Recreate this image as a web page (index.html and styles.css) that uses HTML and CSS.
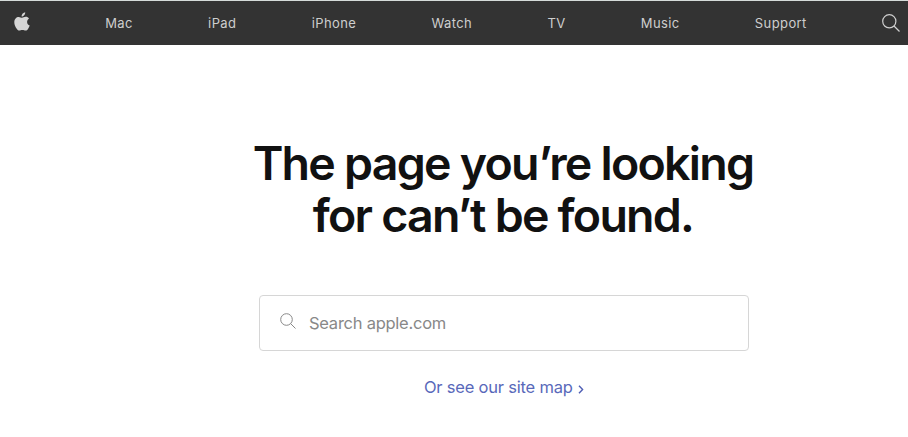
FILE: index.html
```html
<!DOCTYPE html>
<html lang="en">
<head>
    <meta charset="UTF-8">
    <meta name="viewport" content="width=device-width, initial-scale=1.0">
    <title>Page Not Found - Apple</title>
    <link rel="stylesheet" href="styles.css">
</head>
<body>
    <nav class="globalnav">
        <a href="#" class="nav-logo" aria-label="Apple">
            <svg width="16" height="19" viewBox="0 0 16 19">
                <path d="M11.2 0.2c.1 1.200-.4 2.300-1.100 3.100-.7.800-1.700 1.300-2.500 1.200-.1-1.100.4-2.200 1.100-3C9.400.8 10.400.3 11.200.2zM15 6.700c-1.200.7-1.900 1.800-1.900 3.200 0 1.700 1 3.100 2.600 3.700-.4 1.200-1 2.300-1.700 3.300-.7 1-1.400 1.600-2.400 1.600-1.200 0-1.700-.6-3.200-.6s-2.100.6-3.200.6c-1 0-1.800-.8-2.500-1.800C1.200 14.900.3 12.500.3 10.300c0-3.400 2.100-5.400 4.400-5.400 1.400 0 2.500.8 3.400.8.800 0 2-.9 3.700-.9 1.300 0 2.500.6 3.200 1.900z" fill="#d6d6d6"/>
            </svg>
        </a>
        <a href="#">Mac</a>
        <a href="#">iPad</a>
        <a href="#">iPhone</a>
        <a href="#">Watch</a>
        <a href="#">TV</a>
        <a href="#">Music</a>
        <a href="#">Support</a>
        <a href="#" class="nav-search" aria-label="Search">
            <svg width="18" height="18" viewBox="0 0 18 18" fill="none" stroke="#cfcfcf" stroke-width="1.2">
                <circle cx="7.300" cy="7.300" r="6.600"/>
                <path d="M12 12l5.500 5.500"/>
            </svg>
        </a>
    </nav>

    <main class="content">
        <h1>The page you’re looking<br>for can’t be found.</h1>

        <form class="search-form">
            <svg class="search-icon" width="16" height="16" viewBox="0 0 16 16" fill="none" stroke="#888" stroke-width="1">
                <circle cx="6.500" cy="6.500" r="5.800"/>
                <path d="M10.600 10.600l4.900 4.900"/>
            </svg>
            <input type="text" placeholder="Search apple.com" aria-label="Search apple.com">
        </form>

        <a href="#" class="sitemap-link">Or see our site map
            <svg width="6" height="9" viewBox="0 0 6 9" fill="none" stroke="#4f5fb5" stroke-width="1.400">
                <path d="M1 .7l3.600 3.800L1 8.300"/>
            </svg>
        </a>
    </main>
</body>
</html>
```
FILE: styles.css
```css
* {
    box-sizing: border-box;
}
body {
    font-family: Inter, "Liberation Sans", sans-serif;
    background-color: #fff;
    margin: 0;
}
.globalnav {
    display: flex;
    justify-content: space-between;
    align-items: center;
    height: 45px;
    padding: 0 8px 0 14px;
    background-color: #333;
    border-top: 1px solid #d5dbd9;
}
.globalnav a {
    color: #cecece;
    font-size: 13px;
    line-height: 20px;
    letter-spacing: 0.4px;
    text-decoration: none;
}
.globalnav svg {
    display: block;
}
.nav-logo {
    margin-bottom: 4px;
}
.content {
    display: flex;
    flex-direction: column;
    align-items: center;
    width: 500px;
    margin-left: 254px;
    padding-top: 92px;
}
h1 {
    margin: 0 0 0 -2px;
    color: #111;
    font-size: 46.5px;
    font-weight: 600;
    line-height: 52px;
    letter-spacing: -1.75px;
    text-align: center;
    white-space: nowrap;
}
.search-form {
    display: flex;
    align-items: center;
    width: 490px;
    height: 56px;
    margin-top: 54px;
    padding: 0 20px;
    border: 1px solid #d6d6d6;
    border-radius: 4px;
}
.search-icon {
    margin-right: 13px;
    margin-bottom: 4px;
}
.search-form input {
    flex: 1;
    padding: 0;
    border: none;
    outline: none;
    color: #333;
    font-family: inherit;
    font-size: 16.5px;
    letter-spacing: -0.25px;
}
.search-form input::placeholder {
    color: #888;
}
.sitemap-link {
    margin-top: 25px;
    color: #5969ba;
    font-size: 16.5px;
    line-height: 22px;
    letter-spacing: -0.2px;
    text-decoration: none;
}
.sitemap-link svg {
    margin-left: 1px;
    vertical-align: -1px;
}
```
